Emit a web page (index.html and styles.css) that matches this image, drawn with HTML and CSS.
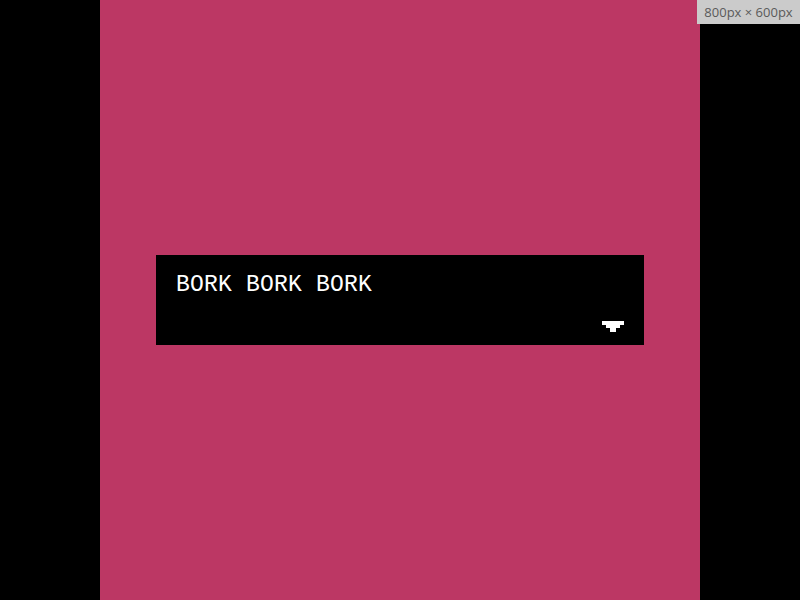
FILE: index.html
```html
<!DOCTYPE html>
<html>
<head>
<meta charset="utf-8">
<link rel="stylesheet" href="styles.css">
</head>
<body>
<div class="stage">
  <div class="dialog">
    <p class="line">BORK BORK BORK</p>
    <svg class="next" width="22" height="11" viewBox="0 0 22 11" shape-rendering="crispEdges">
      <rect x="0" y="0" width="22" height="4" fill="#fff"/>
      <rect x="4" y="4" width="14" height="3" fill="#fff"/>
      <rect x="8" y="7" width="6" height="4" fill="#fff"/>
    </svg>
  </div>
</div>
<div class="size-badge">800px × 600px</div>
</body>
</html>
```
FILE: styles.css
```css
html, body {
  margin: 0;
  padding: 0;
  height: 100%;
  background: #000;
}
.stage {
  width: 600px;
  height: 600px;
  margin: 0 auto;
  background: #bc3764;
  display: flex;
  align-items: center;
  justify-content: center;
}
.dialog {
  width: 488px;
  height: 90px;
  box-sizing: border-box;
  background: #000;
  padding: 17px 20px 13px 20px;
  display: flex;
  flex-direction: column;
  justify-content: space-between;
}
.line {
  margin: 0;
  color: #fff;
  font-family: "Liberation Mono", "DejaVu Sans Mono", monospace;
  font-size: 23px;
  line-height: 26px;
  letter-spacing: 0.2px;
}
.next {
  display: block;
  align-self: flex-end;
}
.size-badge {
  position: absolute;
  top: 0;
  right: 0;
  width: 103px;
  height: 24px;
  background: #cbcbcb;
  color: #5a5a5a;
  font-family: "Open Sans", "Noto Sans", sans-serif;
  font-size: 13px;
  line-height: 24px;
  text-align: center;
}
```
